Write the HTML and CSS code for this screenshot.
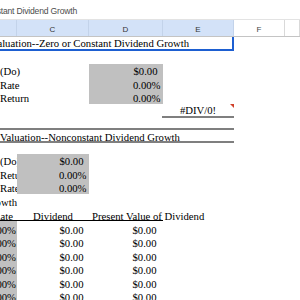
FILE: index.html
```html
<!DOCTYPE html>
<html lang="en">
<head>
    <meta charset="UTF-8">
    <meta name="viewport" content="width=device-width, initial-scale=1.0">
    <title>Stock Valuation--Constant Dividend Growth</title>
    <link rel="stylesheet" href="styles.css">
</head>
<body>
    <!-- window title, scrolled so only the end shows -->
    <div class="titlebar">
        <div class="doc-name">Stock Valuation--Constant Dividend Growth</div>
    </div>

    <!-- column letters -->
    <div class="colheads">
        <div class="colhead sel"></div>
        <div class="colhead sel">C</div>
        <div class="colhead sel">D</div>
        <div class="colhead sel">E</div>
        <div class="colhead">F</div>
        <div class="colhead"></div>
    </div>

    <div class="sheet">
        <!-- Zero / constant growth -->
        <div class="row">
            <div class="cell title selected">Valuation--Zero or Constant Dividend Growth</div>
        </div>
        <div class="row"></div>
        <div class="row">
            <div class="cell label">(Do)</div>
            <div class="cell"></div>
            <div class="cell input num money">$0.00</div>
        </div>
        <div class="row">
            <div class="cell label">Rate</div>
            <div class="cell"></div>
            <div class="cell input num">0.00%</div>
        </div>
        <div class="row">
            <div class="cell label">Return</div>
            <div class="cell"></div>
            <div class="cell input num">0.00%</div>
        </div>
        <div class="row">
            <div class="cell"></div>
            <div class="cell"></div>
            <div class="cell"></div>
            <div class="cell result has-comment">#DIV/0!</div>
        </div>
        <div class="row row-short">
            <div class="cell rule"></div>
        </div>

        <!-- Nonconstant growth -->
        <div class="row">
            <div class="cell title ruled low">Valuation--Nonconstant Dividend Growth</div>
        </div>
        <div class="row row-gap"></div>
        <div class="row">
            <div class="cell label clip">(Do)</div>
            <div class="cell input num money">$0.00</div>
        </div>
        <div class="row">
            <div class="cell label clip">Return</div>
            <div class="cell input num">0.00%</div>
        </div>
        <div class="row">
            <div class="cell label clip">Rate</div>
            <div class="cell input num">0.00%</div>
        </div>
        <div class="row">
            <div class="cell num tight mid">Growth</div>
        </div>
        <div class="row table">
            <div class="cell num head-rate underline">Rate</div>
            <div class="cell center underline">Dividend</div>
            <div class="cell head-pv underline">Present Value of Dividend</div>
        </div>
        <div class="row table">
            <div class="cell input num pct-b">0.00%</div>
            <div class="cell num money">$0.00</div>
            <div class="cell num money-d">$0.00</div>
        </div>
        <div class="row table">
            <div class="cell input num pct-b">0.00%</div>
            <div class="cell num money">$0.00</div>
            <div class="cell num money-d">$0.00</div>
        </div>
        <div class="row table">
            <div class="cell input num pct-b">0.00%</div>
            <div class="cell num money">$0.00</div>
            <div class="cell num money-d">$0.00</div>
        </div>
        <div class="row table">
            <div class="cell input num pct-b">0.00%</div>
            <div class="cell num money">$0.00</div>
            <div class="cell num money-d">$0.00</div>
        </div>
        <div class="row table">
            <div class="cell input num pct-b">0.00%</div>
            <div class="cell num money">$0.00</div>
            <div class="cell num money-d">$0.00</div>
        </div>
        <div class="row table">
            <div class="cell input num pct-b">0.00%</div>
            <div class="cell num money">$0.00</div>
            <div class="cell num money-d">$0.00</div>
        </div>
    </div>
</body>
</html>
```

FILE: styles.css
```css
body {
    margin: 0;
    background: #fff;
    font-family: "Liberation Serif", "Times New Roman", serif;
    font-size: 10.7px;
    color: #000;
    overflow: hidden;
}
.titlebar {
    height: 20px;
    box-sizing: border-box;
    padding-top: 3px;
    border-bottom: 1px solid #e3e3e3;
    display: flex;
    align-items: center;
}
.doc-name {
    width: 77px;
    display: flex;
    justify-content: flex-end;
    white-space: nowrap;
    font-family: "Liberation Sans", Arial, sans-serif;
    font-size: 8.6px;
    letter-spacing: -0.2px;
    color: #4d4d4d;
}
.colheads {
    display: grid;
    grid-template-columns: 17px 72px 74px 71px 51px 1fr;
    height: 17px;
    box-sizing: border-box;
    border-bottom: 1px solid #c4c4c4;
}
.colhead {
    display: flex;
    align-items: center;
    justify-content: center;
    padding-top: 2px;
    border-right: 1px solid #d9d9d9;
    font-family: "Liberation Sans", Arial, sans-serif;
    font-size: 8px;
    color: #444;
    background: #fff;
}
.colhead.sel {
    background: #d3e2f8;
    color: #333;
    border-right-color: #c3d3ea;
}
.row {
    display: grid;
    grid-template-columns: 17px 72px 74px 71px 51px 1fr;
    height: 13.4px;
}
.row-short {
    height: 12.6px;
}
.row-gap {
    height: 10.4px;
}
.cell {
    display: flex;
    align-items: flex-end;
    white-space: nowrap;
    line-height: 12px;
    padding: 0 2px;
}
.table .cell,
.low {
    line-height: 8px;
}
.mid {
    line-height: 10px;
}
.num {
    justify-content: flex-end;
    padding-right: 2.5px;
}
.money {
    padding-right: 5.5px;
}
.money-d {
    padding-right: 6.5px;
}
.pct-b {
    padding-right: 1px;
}
.center {
    justify-content: center;
}
.input {
    background: #c0c0c0;
}
.label {
    padding-left: 0;
}
.clip {
    overflow: hidden;
}
.title {
    grid-column: 1 / 5;
    margin-left: -54px;
    justify-content: center;
}
.selected {
    border: 2px solid #1d5fd1;
    border-top-width: 0;
}
.ruled {
    border-bottom: 2px solid #7f7f7f;
}
.rule {
    grid-column: 1 / 5;
    border-bottom: 2px solid #7f7f7f;
}
.result {
    position: relative;
    justify-content: center;
    border-bottom: 2px solid #7f7f7f;
    margin-left: -1px;
}
.has-comment::after {
    content: "";
    position: absolute;
    top: 0;
    right: 0;
    border-top: 4px solid #d0402a;
    border-left: 4px solid transparent;
}
.tight {
    padding-right: 0;
}
.head-rate {
    padding-right: 4px;
}
.head-pv {
    padding-left: 3px;
}
.underline {
    border-bottom: 1px solid #000;
}
```
